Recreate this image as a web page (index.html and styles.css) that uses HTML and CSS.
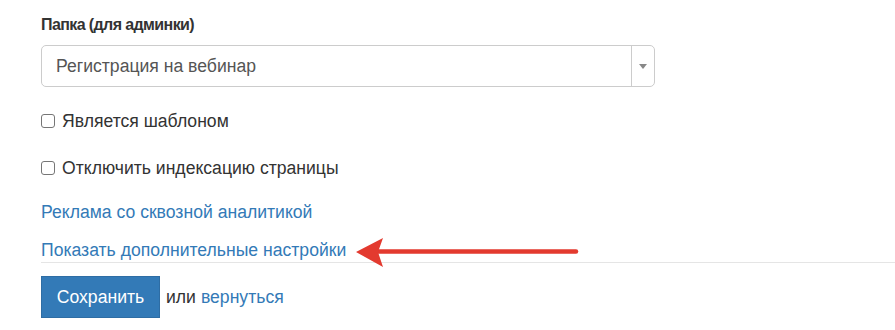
FILE: index.html
```html
<!DOCTYPE html>
<html lang="ru">
<head>
<meta charset="utf-8">
<link rel="stylesheet" href="styles.css">
</head>
<body>
<form class="form">
  <div class="group">
    <label class="label">Папка (для админки)</label>
    <div class="select">
      <span class="select-text">Регистрация на вебинар</span>
      <span class="select-arrow"><span class="caret"></span></span>
    </div>
  </div>
  <div class="check"><span class="box"></span><span>Является шаблоном</span></div>
  <div class="check check2"><span class="box"></span><span>Отключить индексацию страницы</span></div>
  <div class="links">
    <a class="link" href="#">Реклама со сквозной аналитикой</a>
    <a class="link link2" href="#">Показать дополнительные настройки</a>
  </div>
  <div class="actions">
    <button type="button" class="btn">Сохранить</button>
    <span class="or">или</span>
    <a class="link" href="#">вернуться</a>
  </div>
</form>
<svg class="arrow" width="240" height="40" viewBox="0 0 240 40">
  <line x1="20" y1="21.5" x2="221" y2="21.5" stroke="#e33a2f" stroke-width="4.5" stroke-linecap="round"/>
  <polygon points="1,22 28,8 23,22 28,37" fill="#e33a2f"/>
</svg>
</body>
</html>
```
FILE: styles.css
```css
html, body {
  margin: 0;
  padding: 0;
  background: #fff;
}
body {
  font-family: "Liberation Sans", Arial, sans-serif;
  font-size: 17.6px;
  color: #333;
  position: relative;
  width: 895px;
  height: 330px;
  overflow: hidden;
}
.form {
  padding: 13px 0 0 41px;
  display: flex;
  flex-direction: column;
}
.group {
  display: flex;
  flex-direction: column;
  gap: 8px;
  width: 614px;
}
.label {
  font-weight: bold;
  font-size: 16px;
  letter-spacing: -0.6px;
  line-height: 24px;
}
.select {
  box-sizing: border-box;
  height: 42px;
  border: 1px solid #ccc;
  border-radius: 5px;
  display: flex;
  align-items: stretch;
}
.select-text {
  flex: 1;
  padding-left: 14px;
  display: flex;
  align-items: center;
  color: #555;
}
.select-arrow {
  width: 22px;
  border-left: 1px solid #ccc;
  display: flex;
  align-items: center;
  justify-content: center;
}
.caret {
  width: 0;
  height: 0;
  border-left: 4px solid transparent;
  border-right: 4px solid transparent;
  border-top: 5px solid #888;
}
.check {
  display: flex;
  align-items: center;
  gap: 7px;
  line-height: 24px;
  margin-top: 22px;
}
.check2 {
  margin-top: 23px;
}
.box {
  box-sizing: border-box;
  width: 14px;
  height: 14px;
  border: 1px solid #767676;
  border-radius: 3px;
}
.links {
  display: flex;
  flex-direction: column;
  align-items: flex-start;
  margin-top: 20px;
  width: 854px;
  border-bottom: 1px solid #e5e5e5;
}
.link {
  color: #337ab7;
  text-decoration: none;
  line-height: 24px;
}
.link2 {
  margin-top: 14px;
}
.actions {
  display: flex;
  align-items: center;
  margin-top: 13px;
}
.btn {
  font-family: inherit;
  font-size: 17.6px;
  color: #fff;
  background: #337ab7;
  border: 1px solid #2e6da4;
  border-radius: 0;
  width: 119px;
  height: 42px;
  padding: 0;
  margin-right: 6px;
}
.or {
  margin-right: 5px;
}
.arrow {
  position: absolute;
  left: 355px;
  top: 230px;
}
```
